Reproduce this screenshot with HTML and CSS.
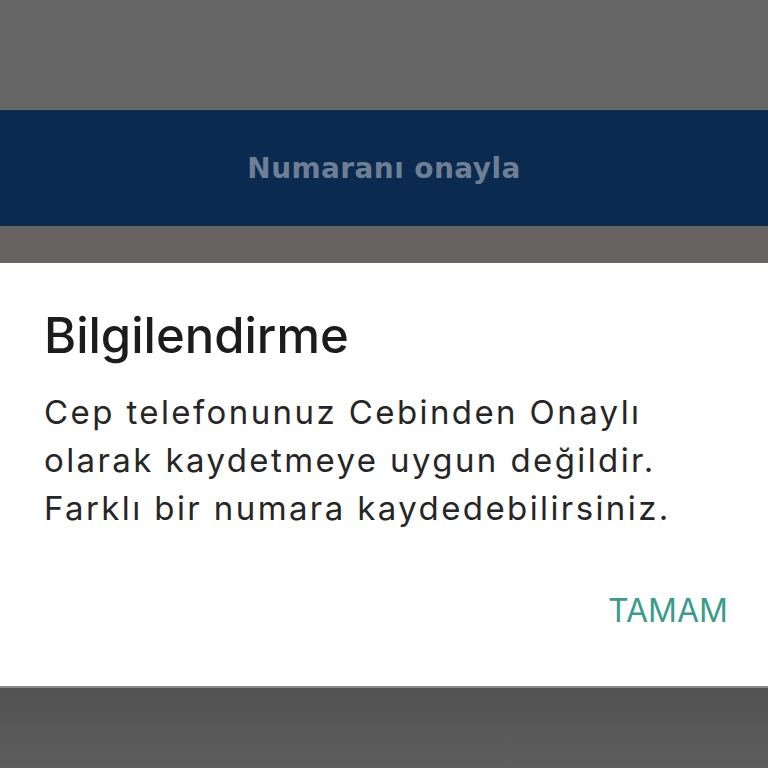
FILE: index.html
```html
<!DOCTYPE html>
<html lang="tr">
<head>
  <meta charset="utf-8">
  <title>Numaranı onayla</title>
  <link rel="stylesheet" href="styles.css">
</head>
<body>
  <div class="screen">
    <div class="dim dim-top"></div>

    <div class="confirm-bar">
      <span class="confirm-label">Numaranı onayla</span>
    </div>

    <div class="dim dim-mid"></div>

    <div class="dialog">
      <h2 class="dialog-title">Bilgilendirme</h2>
      <p class="dialog-text">Cep telefonunuz Cebinden Onaylı<br>olarak kaydetmeye uygun değildir.<br>Farklı bir numara kaydedebilirsiniz.</p>
      <div class="dialog-actions">
        <button class="dialog-btn">TAMAM</button>
      </div>
    </div>

    <div class="dim dim-bottom"></div>
  </div>
</body>
</html>
```

FILE: styles.css
```css
html, body {
  margin: 0;
  padding: 0;
}

body {
  font-family: Inter, "Open Sans", sans-serif;
  background-color: #5a5a5a;
}

.screen {
  width: 768px;
  height: 768px;
  display: flex;
  flex-direction: column;
  overflow: hidden;
}

.dim {
  background-color: #666;
}

.dim-top {
  height: 110px;
  border-bottom: 1px solid #6c6c6c;
  box-sizing: border-box;
}

.dim-mid {
  height: 37px;
  background-color: #676363;
}

.dim-bottom {
  flex: 1;
  background: linear-gradient(#525252, #5e5e5e);
  border-top: 2px solid #888;
}

.confirm-bar {
  height: 116px;
  background-color: #0a2a4f;
  display: flex;
  align-items: center;
  justify-content: center;
}

.confirm-label {
  font-family: "DejaVu Sans", sans-serif;
  font-size: 28px;
  font-weight: 700;
  letter-spacing: 0.4px;
  color: #6e7f95;
}

.dialog {
  height: 423px;
  background-color: #fff;
  padding: 0 40px 0 44px;
  display: flex;
  flex-direction: column;
}

.dialog-title {
  margin: 43px 0 0;
  font-size: 49px;
  font-weight: 500;
  line-height: 60px;
  color: #1c1c1c;
}

.dialog-text {
  margin: 22px 0 0;
  font-size: 33px;
  line-height: 48px;
  letter-spacing: 2.4px;
  color: #262626;
}

.dialog-actions {
  display: flex;
  justify-content: flex-end;
  margin-top: 59px;
}

.dialog-btn {
  font-family: inherit;
  font-size: 32px;
  color: #3a9d8c;
  background: none;
  border: none;
  padding: 0;
}
```
